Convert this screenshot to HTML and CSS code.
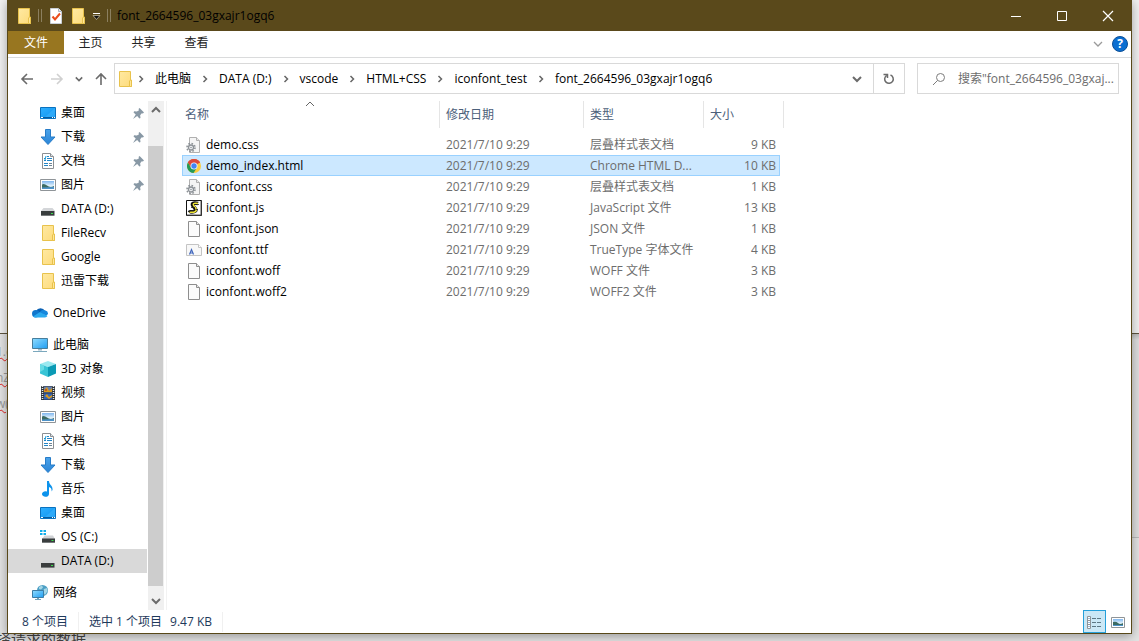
FILE: index.html
```html
<!DOCTYPE html>
<html lang="zh-CN">
<head>
<meta charset="utf-8">
<meta name="viewport" content="width=device-width, initial-scale=1">
<title>font_2664596_03gxajr1ogq6</title>
<link rel="stylesheet" href="styles.css">
</head>
<body>
<svg class="sprite" width="0" height="0" aria-hidden="true">
  <defs>
    <linearGradient id="g-folder" x1="0" y1="0" x2="1" y2="1"><stop offset="0" stop-color="#ffe9a2"/><stop offset="1" stop-color="#fddb7b"/></linearGradient>
    <linearGradient id="g-screen" x1="0" y1="0" x2="1" y2="1"><stop offset="0" stop-color="#2fb0ff"/><stop offset="1" stop-color="#0f93ee"/></linearGradient>
    <linearGradient id="g-pc" x1="0" y1="0" x2="1" y2="1"><stop offset="0" stop-color="#8fdcff"/><stop offset="1" stop-color="#1f9df2"/></linearGradient>
    <linearGradient id="g-arrow" x1="0" y1="0" x2="0" y2="1"><stop offset="0" stop-color="#4aa3ea"/><stop offset="1" stop-color="#2a84d6"/></linearGradient>
    <linearGradient id="g-sky" x1="0" y1="0" x2="0" y2="1"><stop offset="0" stop-color="#7fb6ee"/><stop offset="0.6" stop-color="#e2f2fb"/><stop offset="1" stop-color="#b9d9ea"/></linearGradient>
  </defs>
  <symbol id="folder" viewBox="0 0 16 16">
    <path d="M2.500 .5h11v10.500l1 .5v4h-12z" fill="url(#g-folder)" stroke="#e8c24c"/>
    <path d="M12.500 15.500v-5.500l1-1h1v6.500z" fill="#ffe69a" stroke="#e8c24c"/>
  </symbol>
  <symbol id="check-doc" viewBox="0 0 16 16">
    <path d="M2.500 .5h8l3 3v12h-11z" fill="#fff" stroke="#c9ced6"/>
    <path d="M10.500 .5v3h3" fill="#e6e9ee" stroke="#aab2be"/>
    <path d="M4.500 8.500l2.500 3 5-6" fill="none" stroke="#ea4d1c" stroke-width="2"/>
  </symbol>
  <symbol id="desktop" viewBox="0 0 16 16">
    <path d="M.5 2.500h15v11h-15z" fill="url(#g-screen)" stroke="#0a72bf"/>
    <path d="M4 13L15 3v10z" fill="#48bbff" opacity=".45"/>
    <path d="M1 12h14v1H1z" fill="#075a9c"/><path d="M1 12h2v1H1zM12 12h1v1h-1zM14 12h1v1h-1z" fill="#fff"/>
  </symbol>
  <symbol id="download" viewBox="0 0 16 16"><path d="M5.500 .5h5v7.500h4.500l-7 7.500-7-7.500h4.500z" fill="url(#g-arrow)" stroke="#277cc8"/></symbol>
  <symbol id="document" viewBox="0 0 16 16">
    <path d="M2.500 .5h8l3 3v12h-11z" fill="#fff" stroke="#8b8f93"/><path d="M10.500 .5v3h3" fill="#dfe3e6" stroke="#8b8f93"/>
    <path d="M4 5.500h1.500M7 3.500h2M7 5.500h5M4 7.500h2M7 7.500h5M4 10.500h4M4 12.500h4" stroke="#2586c7"/>
    <path d="M6 3l-1 4" stroke="#16a0dd"/><path d="M9 10h3v1H9zM9 12h3v1H9z" fill="#6e8495"/>
  </symbol>
  <symbol id="picture" viewBox="0 0 16 16">
    <path d="M.5 2.500h15v11h-15z" fill="#fff" stroke="#8f9498"/><path d="M2 4h12v8H2z" fill="url(#g-sky)"/>
    <path d="M2 7.500q2-1.500 5 1t7 .5v3H2z" fill="#3c6b63"/><path d="M2 10.500l12-.5v2H2z" fill="#4d92c8"/>
  </symbol>
  <symbol id="drive" viewBox="0 0 16 16">
    <path d="M3.500 7h9l2.500 3H1z" fill="#d4d6d9"/><path d="M1 10h13.500v4H1z" fill="#393d3e"/>
    <path d="M1 14h13.500v1H1z" fill="#777b7c"/><path d="M11 12h2v1h-2z" fill="#38e04a"/>
  </symbol>
  <symbol id="os-drive" viewBox="0 0 16 16">
    <path d="M0 1h2.500v2H0zM3.500 1H6v2H3.500zM0 4h2.500v2H0zM3.500 4H6v2H3.500z" fill="#12aeea"/>
    <path d="M4.500 6.500h8.500l2 3.500H2z" fill="#d0d2d5"/><path d="M2 9.500h13V14H2z" fill="#393d3e"/>
    <path d="M2 13h13v1H2z" fill="#777b7c"/><path d="M11.500 11h2v1h-2z" fill="#38e04a"/>
  </symbol>
  <symbol id="cloud" viewBox="0 0 16 16">
    <path d="M4 6a5 4.800 0 0 1 9 0l-2 4H4z" fill="#0a61b4"/><circle cx="3.700" cy="8.700" r="3.700" fill="#1076cc"/>
    <path d="M8 7a4 4 0 0 1 5.500-1.500A3.500 3.500 0 0 1 16 9l-2 2z" fill="#1687dc"/>
    <path d="M1 11.500l7-4.500 7.500 4a3 3 0 0 1-2.500 1.500H3.500A3.500 3.500 0 0 1 1 11.500z" fill="#2aa9ee"/>
  </symbol>
  <symbol id="pc" viewBox="0 0 16 16">
    <path d="M.5 1.500h15v10h-15z" fill="url(#g-pc)" stroke="#477e9c"/><path d="M6 12h4v1.500H6z" fill="#9eb9c8"/><path d="M1 14h14v1H1z" fill="#7ba8bd"/>
  </symbol>
  <symbol id="cube" viewBox="0 0 16 16">
    <path d="M0 3l8-3 8 3-8 3z" fill="#9be9f0"/><path d="M0 3l8 3v10l-8-3.500z" fill="#38c4d5"/><path d="M16 3l-8 3v10l8-3.500z" fill="#0a9ab5"/><path d="M0 3l4 1.500v4L0 11z" fill="#68dbe5"/>
  </symbol>
  <symbol id="video" viewBox="0 0 16 16">
    <path d="M1 1h14v14H1z" fill="#31353a"/><path d="M4 1.500h8v6H4z" fill="#6680ae"/><path d="M4 8.500h8v6H4z" fill="#3465b8"/>
    <path d="M2.500 1v14M13.500 1v14" stroke="#e5e7e9" stroke-width="1.500" stroke-dasharray="1 1"/>
    <path d="M4 5l3-3 2 4 3-3v4H4zM5 11l2-2 2 3 3-2v2l-3 2z" fill="#d89a1d"/><circle cx="6" cy="5" r="1" fill="#b84123"/>
  </symbol>
  <symbol id="music" viewBox="0 0 16 16">
    <path d="M7 0h2c0 4 4 4 3.500 9l-1 1.500c.5-3-1-4-2.500-4.500v7A3.500 2.800 0 1 1 7 10.500z" fill="#0d93ec"/>
  </symbol>
  <symbol id="network" viewBox="0 0 16 16">
    <circle cx="10.500" cy="5.500" r="5.500" fill="#4c9fc5"/><path d="M7 2l3-1.500 1 2-2 2-2-.5zM12 4l3-1 .5 3-2.500 4-2-3z" fill="#a5d6e6"/>
    <path d="M.5 5.500h11v7H.5z" fill="url(#g-pc)" stroke="#3b7da6"/><path d="M5 13h2v1h2v1H3v-1h2z" fill="#71a3bc"/>
  </symbol>
  <symbol id="pin" viewBox="0 0 10 10"><path d="M6 0l4 4-1 1-1-.3-1.500 1.800.3 2.500-1 .5-2-2.200L0 10l2.500-4L.5 4 1 3l2.500.2L5.500 2 5 1z" fill="#8898a5"/></symbol>
  <symbol id="file" viewBox="0 0 16 16"><path d="M2.500 .5h8l3 3v12h-11z" fill="#fbfbfb" stroke="#8e8e8e"/><path d="M10.500 .5v3h3" fill="#e9e9e9" stroke="#8e8e8e"/></symbol>
  <symbol id="css-file" viewBox="0 0 16 16">
    <path d="M3.500 .5h7l3 3v12h-10z" fill="#f5f5f5" stroke="#b0b0b0"/><path d="M10.500 .5v3h3" fill="#e9e9e9" stroke="#b0b0b0"/>
    <circle cx="5" cy="10.500" r="4" fill="none" stroke="#8d9297" stroke-width="1.600" stroke-dasharray="1.600 1.540"/>
    <circle cx="5" cy="10.500" r="2.500" fill="#f0f2f4" stroke="#8d9297" stroke-width="1.300"/><circle cx="5" cy="10.500" r=".8" fill="#8d9297"/>
  </symbol>
  <symbol id="chrome" viewBox="0 0 16 16">
    <circle cx="8" cy="8" r="7" fill="#fccc3d"/><path d="M8 8L1.900 4.500A7 7 0 0 1 14.100 4.500z" fill="#de4a3c"/><path d="M8 4.500h6.100A7 7 0 0 0 1.900 4.500L5 9.700z" fill="#de4a3c"/>
    <path d="M1.900 4.500A7 7 0 0 0 7.500 15l3.500-5.300H5z" fill="#259a56"/><circle cx="8" cy="8" r="3.500" fill="#f4f7fb"/><circle cx="8" cy="8" r="2.700" fill="#4285f4"/>
  </symbol>
  <symbol id="js-file" viewBox="0 0 16 16">
    <path d="M.5 .5h15v15H.5z" fill="#fff" stroke="#111"/><path d="M15 1v14H1" fill="none" stroke="#555"/>
    <path d="M12 3.500C7 2 5 4 7.500 6.500s3.500 4 .5 5S4.500 11 3 12.500" fill="none" stroke="#111" stroke-width="3.600"/>
    <path d="M12 3.500C7.500 2.500 6 4 8.500 6.500s2.500 4.500 0 5.500-3.500-.5-5 .5" fill="none" stroke="#f0e534" stroke-width="1.500"/>
    <path d="M8 4.500h5M5 7.500h4M10 9.500h2M4 10.500h4" stroke="#222" stroke-width=".8"/>
  </symbol>
  <symbol id="ttf-file" viewBox="0 0 16 16">
    <path d="M.5 2.500h12l3 3v8H.5z" fill="#f8f8f8" stroke="#c4c4c4"/><path d="M12.500 2.500v3h3" fill="#fff" stroke="#c4c4c4"/>
    <path d="M3.500 12.500l2-5 2 5M4.500 11h2" fill="none" stroke="#4167bd" stroke-width="1.200"/>
  </symbol>
  <symbol id="chev-right" viewBox="0 0 6 8"><path d="M1.500 1l3 3-3 3" fill="none" stroke="currentColor" stroke-width="1.500"/></symbol>
  <symbol id="chev-down" viewBox="0 0 10 10"><path d="M1 3l4 4 4-4" fill="none" stroke="currentColor" stroke-width="2"/></symbol>
  <symbol id="chev-light" viewBox="0 0 10 10"><path d="M1 3l4 4 4-4" fill="none" stroke="currentColor" stroke-width="1.300"/></symbol>
  <symbol id="chev-thin" viewBox="0 0 10 10"><path d="M1 7l4-4 4 4" fill="none" stroke="currentColor"/></symbol>
  <symbol id="arrow-left" viewBox="0 0 14 14"><path d="M13 7H2M7 2L2 7l5 5" fill="none" stroke="currentColor" stroke-width="1.600"/></symbol>
</svg>

<div class="desktop">
  <div class="backdrop" aria-hidden="true">
    <div class="back-window"></div>
    <div class="back-code"><span>1.c</span><span>nZ</span><span>w(</span></div>
    <div class="back-edge"></div>
    <div class="back-page">择请求的数据</div>
  </div>

  <main class="window">
    <header class="titlebar">
      <div class="quick">
        <svg class="icon"><use href="#folder"/></svg>
        <i class="grip"></i>
        <button class="quick-btn" aria-label="属性"><svg class="icon"><use href="#check-doc"/></svg></button>
        <button class="quick-btn" aria-label="新建文件夹"><svg class="icon"><use href="#folder"/></svg></button>
        <button class="quick-btn" aria-label="自定义快速访问工具栏"><svg class="menu-mark" viewBox="0 0 9 8"><path d="M1 1.500h7" stroke="#fff"/><path d="M1 3.500h7L4.500 7.500z" fill="#111" stroke="#cfc7ae" stroke-width=".7"/></svg></button>
        <i class="grip"></i>
      </div>
      <h1 class="title">font_2664596_03gxajr1ogq6</h1>
      <div class="caption">
        <button aria-label="最小化"><svg viewBox="0 0 12 12"><path d="M1 6.500h10" stroke="#fff"/></svg></button>
        <button aria-label="最大化"><svg viewBox="0 0 12 12"><path d="M1.500 1.500h9v9h-9z" fill="none" stroke="#fff"/></svg></button>
        <button aria-label="关闭"><svg viewBox="0 0 12 12"><path d="M1 1l10 10M11 1L1 11" stroke="#fff" stroke-width="1.200"/></svg></button>
      </div>
    </header>

    <div class="ribbon">
      <button class="tab tab-file">文件</button>
      <button class="tab">主页</button>
      <button class="tab">共享</button>
      <button class="tab">查看</button>
      <div class="ribbon-end">
        <button class="plain muted" aria-label="展开功能区"><svg class="chev"><use href="#chev-light"/></svg></button>
        <button class="help" aria-label="帮助">?</button>
      </div>
    </div>

    <div class="navbar">
      <div class="history">
        <button class="plain" aria-label="后退"><svg class="arrow"><use href="#arrow-left"/></svg></button>
        <button class="plain off flip" aria-label="前进"><svg class="arrow"><use href="#arrow-left"/></svg></button>
        <button class="plain recent" aria-label="最近浏览的位置"><svg class="chev-small"><use href="#chev-down"/></svg></button>
        <button class="plain up" aria-label="上移"><svg class="arrow"><use href="#arrow-left"/></svg></button>
      </div>
      <nav class="address" aria-label="地址">
        <svg class="icon"><use href="#folder"/></svg>
        <svg class="sep"><use href="#chev-right"/></svg><a href="#">此电脑</a>
        <svg class="sep"><use href="#chev-right"/></svg><a href="#">DATA (D:)</a>
        <svg class="sep"><use href="#chev-right"/></svg><a href="#">vscode</a>
        <svg class="sep"><use href="#chev-right"/></svg><a href="#">HTML+CSS</a>
        <svg class="sep"><use href="#chev-right"/></svg><a href="#">iconfont_test</a>
        <svg class="sep"><use href="#chev-right"/></svg><a href="#">font_2664596_03gxajr1ogq6</a>
        <button class="plain drop" aria-label="以前的位置"><svg class="chev"><use href="#chev-down"/></svg></button>
        <button class="plain refresh" aria-label="刷新"><svg class="chev" viewBox="0 0 12 12"><path d="M7.500 2A4.300 4.300 0 1 1 3.500 2.500M.5 1.500h4V5" fill="none" stroke="currentColor" stroke-width="1.500"/></svg></button>
      </nav>
      <label class="search">
        <svg class="lens" viewBox="0 0 14 14"><circle cx="8.500" cy="5.500" r="4" fill="none" stroke="#7c7c7c"/><path d="M5.500 8.500L1 13" stroke="#7c7c7c"/></svg>
        <input type="text" aria-label="搜索" placeholder="搜索&quot;font_2664596_03gxaj...">
      </label>
    </div>

    <div class="body">
      <nav class="tree" aria-label="导航窗格">
        <ul>
          <li><a href="#"><svg class="icon"><use href="#desktop"/></svg>桌面<svg class="pin"><use href="#pin"/></svg></a></li>
          <li><a href="#"><svg class="icon"><use href="#download"/></svg>下载<svg class="pin"><use href="#pin"/></svg></a></li>
          <li><a href="#"><svg class="icon"><use href="#document"/></svg>文档<svg class="pin"><use href="#pin"/></svg></a></li>
          <li><a href="#"><svg class="icon"><use href="#picture"/></svg>图片<svg class="pin"><use href="#pin"/></svg></a></li>
          <li><a href="#"><svg class="icon"><use href="#drive"/></svg>DATA (D:)</a></li>
          <li><a href="#"><svg class="icon"><use href="#folder"/></svg>FileRecv</a></li>
          <li><a href="#"><svg class="icon"><use href="#folder"/></svg>Google</a></li>
          <li><a href="#"><svg class="icon"><use href="#folder"/></svg>迅雷下载</a></li>
        </ul>
        <ul>
          <li><a class="root" href="#"><svg class="icon"><use href="#cloud"/></svg>OneDrive</a></li>
        </ul>
        <ul>
          <li><a class="root" href="#"><svg class="icon"><use href="#pc"/></svg>此电脑</a></li>
          <li><a href="#"><svg class="icon"><use href="#cube"/></svg>3D 对象</a></li>
          <li><a href="#"><svg class="icon"><use href="#video"/></svg>视频</a></li>
          <li><a href="#"><svg class="icon"><use href="#picture"/></svg>图片</a></li>
          <li><a href="#"><svg class="icon"><use href="#document"/></svg>文档</a></li>
          <li><a href="#"><svg class="icon"><use href="#download"/></svg>下载</a></li>
          <li><a href="#"><svg class="icon"><use href="#music"/></svg>音乐</a></li>
          <li><a href="#"><svg class="icon"><use href="#desktop"/></svg>桌面</a></li>
          <li><a href="#"><svg class="icon"><use href="#os-drive"/></svg>OS (C:)</a></li>
          <li><a class="current" href="#"><svg class="icon"><use href="#drive"/></svg>DATA (D:)</a></li>
        </ul>
        <ul>
          <li><a class="root" href="#"><svg class="icon"><use href="#network"/></svg>网络</a></li>
        </ul>
      </nav>
      <div class="scrollbar">
        <button class="plain flip-up" aria-label="向上滚动"><svg class="chev"><use href="#chev-down"/></svg></button>
        <div class="track"><div class="thumb"></div></div>
        <button class="plain" aria-label="向下滚动"><svg class="chev"><use href="#chev-down"/></svg></button>
      </div>
      <section class="files">
        <table>
          <colgroup><col class="c-name"><col class="c-date"><col class="c-type"><col class="c-size"><col class="c-end"></colgroup>
          <thead>
            <tr><th>名称<svg class="sort"><use href="#chev-thin"/></svg></th><th>修改日期</th><th>类型</th><th colspan="2">大小</th></tr>
          </thead>
          <tbody>
            <tr><td><span class="name"><svg class="icon"><use href="#css-file"/></svg>demo.css</span></td><td>2021/7/10 9:29</td><td>层叠样式表文档</td><td>9 KB</td></tr>
            <tr class="selected"><td><span class="name"><svg class="icon"><use href="#chrome"/></svg>demo_index.html</span></td><td>2021/7/10 9:29</td><td>Chrome HTML D...</td><td>10 KB</td></tr>
            <tr><td><span class="name"><svg class="icon"><use href="#css-file"/></svg>iconfont.css</span></td><td>2021/7/10 9:29</td><td>层叠样式表文档</td><td>1 KB</td></tr>
            <tr><td><span class="name"><svg class="icon"><use href="#js-file"/></svg>iconfont.js</span></td><td>2021/7/10 9:29</td><td>JavaScript 文件</td><td>13 KB</td></tr>
            <tr><td><span class="name"><svg class="icon"><use href="#file"/></svg>iconfont.json</span></td><td>2021/7/10 9:29</td><td>JSON 文件</td><td>1 KB</td></tr>
            <tr><td><span class="name"><svg class="icon"><use href="#ttf-file"/></svg>iconfont.ttf</span></td><td>2021/7/10 9:29</td><td>TrueType 字体文件</td><td>4 KB</td></tr>
            <tr><td><span class="name"><svg class="icon"><use href="#file"/></svg>iconfont.woff</span></td><td>2021/7/10 9:29</td><td>WOFF 文件</td><td>3 KB</td></tr>
            <tr><td><span class="name"><svg class="icon"><use href="#file"/></svg>iconfont.woff2</span></td><td>2021/7/10 9:29</td><td>WOFF2 文件</td><td>3 KB</td></tr>
          </tbody>
        </table>
      </section>
    </div>

    <footer class="status">
      <span class="count">8 个项目</span>
      <span class="chosen"><span>选中 1 个项目</span><span>9.47 KB</span></span>
      <div class="views">
        <button class="view on" aria-label="详细信息"><svg class="icon" viewBox="0 0 16 16"><path d="M.5 2.500h3v12h-3zM.5 6.500h3M.5 10.500h3" fill="#fff" stroke="#8f9498"/><path d="M2 4v1M2 8v1M2 12v1" stroke="#3478b5"/><path d="M5 4.500h4M10 4.500h4M5 8.500h4M10 8.500h4M5 12.500h4M10 12.500h4" stroke="#5d7885"/></svg></button>
        <button class="view" aria-label="大缩略图"><svg class="icon" viewBox="0 0 16 16"><path d="M1.500 3.500h13v10h-13z" fill="#fff" stroke="#8f9498"/><path d="M3 5h10v7H3z" fill="url(#g-sky)"/><path d="M3 8q3-1 5 1t5 0v3H3z" fill="#3c6b63"/><path d="M3 11h10v1H3z" fill="#4d92c8"/></svg></button>
      </div>
    </footer>
  </main>
</div>
</body>
</html>
```
FILE: styles.css
```css
* { box-sizing: border-box; }

body {
  margin: 0;
  color: #000;
  font: 12px/20px "Open Sans", "Noto Sans CJK SC", sans-serif;
}

button { border: 0; padding: 0; background: none; color: inherit; font: inherit; }
a { color: inherit; text-decoration: none; }
svg { display: block; flex: none; }
ul { margin: 0; padding: 0; list-style: none; }

.sprite { position: absolute; }
.icon { width: 16px; height: 16px; }
.chev { width: 10px; height: 10px; }
.chev-small { width: 8px; height: 8px; }
.plain { display: flex; align-items: center; justify-content: center; color: #6b6b6b; }
.plain.muted { color: #9a9a9a; }
.plain.off { color: #d0d0d0; }

/* Desktop and the windows lying behind */
.desktop {
  position: relative;
  display: flex;
  height: 100vh;
  min-height: 640px;
  padding: 0 7px 7px;
  overflow: hidden;
  background: #e3e3e3;
}
.backdrop { position: absolute; inset: 0; overflow: hidden; }
.back-window {
  position: absolute; inset: 0 0 auto; height: 334px;
  border-bottom: 1px solid #5e5540;
  background: #f1f1f1;
}
.back-code {
  position: absolute; left: -4px; top: 342px;
  display: flex; flex-direction: column; gap: 6px;
  color: #999;
}
.back-code span { height: 20px; text-decoration: underline wavy #e02020 1px; }
.back-edge { position: absolute; right: 0; top: 334px; width: 7px; height: 204px; border-bottom: 1px solid #bbb; background: linear-gradient(#bcbcbc, #dedede 6px); }
.back-page { position: absolute; left: -4px; bottom: -8px; font-size: 15px; color: #444; }

/* Explorer window */
.window {
  position: relative;
  display: flex; flex: 1; flex-direction: column;
  min-width: 0;
  border: 1px solid #584819;
  border-top: 0;
  background: #fff;
  box-shadow: 0 2px 10px rgba(0, 0, 0, .35);
}

.titlebar { display: flex; align-items: center; height: 31px; background: #5a491b; }
.quick { display: flex; align-items: center; gap: 6px; padding-left: 8px; }
.quick-btn { display: flex; }
.grip { width: 4px; height: 13px; border: 1px solid #8b7f5f; border-width: 0 1px; }
.menu-mark { width: 9px; height: 8px; }
.title { margin: 0 0 0 6px; flex: 1; font-size: 12px; font-weight: 400; }
.caption { display: flex; align-self: stretch; }
.caption button { display: flex; align-items: center; justify-content: center; width: 46px; }
.caption svg { width: 12px; height: 12px; }

.ribbon { display: flex; height: 27px; border-bottom: 1px solid #dadbdc; color: #222; }
.tab { width: 53px; height: 24px; }
.tab-file { width: 56px; height: 23px; background: #987620; color: #fff; }
.ribbon-end { display: flex; align-items: center; gap: 9px; margin-left: auto; padding-right: 3px; }
.help {
  width: 16px; height: 16px;
  border: 1px solid #0b4f97; border-radius: 50%;
  background: #0a6ed1; color: #fff;
  font-weight: 700; line-height: 14px;
}

.navbar { display: flex; align-items: center; gap: 12px; padding: 5px 12px 6px 12px; }
.history { display: flex; align-items: center; gap: 16px; margin-right: -12px; }
.arrow { width: 14px; height: 14px; }
.flip svg { transform: scaleX(-1); }
.flip-up svg { transform: scaleY(-1); }
.up svg { transform: rotate(90deg); }
.recent { margin: 0 -5px; }
.up { margin-right: 6px; }
.address {
  display: flex; flex: 1; align-items: center; gap: 11px;
  min-width: 0; height: 31px;
  padding-left: 2px;
  border: 1px solid #d9d9d9;
  white-space: nowrap;
}
.address .icon { margin-right: -6px; }
.sep { width: 6px; height: 8px; color: #666; }
.drop { margin-left: auto; }
.refresh { align-self: stretch; width: 31px; border-left: 1px solid #d9d9d9; }
.refresh .chev { width: 12px; height: 12px; }
.search {
  display: flex; align-items: center; gap: 12px;
  width: 202px; height: 31px;
  padding-left: 14px;
  border: 1px solid #d9d9d9;
}
.lens { width: 14px; height: 14px; }
.search input { flex: 1; min-width: 0; border: 0; padding: 0; outline: 0; background: none; font: inherit; }
.search input::placeholder { color: #6d6d6d; opacity: 1; }

/* Navigation pane and file list */
.body { display: flex; flex: 1; min-height: 0; padding-top: 1px; }
.tree { display: flex; flex-direction: column; gap: 8px; width: 140px; overflow: hidden; }
.tree a { display: flex; align-items: center; gap: 5px; height: 24px; margin-right: 1px; padding: 0 3px 0 32px; }
.tree .root { padding-left: 24px; }
.tree .current { background: #d9d9d9; }
.pin { width: 11px; height: 11px; margin-left: auto; }
.scrollbar { display: flex; flex-direction: column; width: 16px; background: #f0f0f0; }
.scrollbar .plain { height: 18px; }
.track { flex: 1; padding: 27px 1px 6px 0; }
.thumb { height: 100%; background: #cdcdcd; }
.files { flex: 1; min-width: 0; margin-left: 2px; padding-left: 15px; border-left: 1px solid #f2f2f2; }

table { width: 602px; table-layout: fixed; border-collapse: separate; border-spacing: 0; }
.c-name { width: 258px; }
.c-date { width: 144px; }
.c-type { width: 120px; }
.c-size { width: 76px; }
.c-end { width: 4px; }
th { position: relative; height: 27px; padding: 0 6px; border-right: 1px solid #e5e5e5; color: #4c607a; font-weight: 400; text-align: left; }
th:first-child { padding-left: 3px; }
.sort { position: absolute; top: -2px; left: calc(50% - 6px); width: 10px; height: 10px; color: #666; }
thead::after { content: ""; display: block; height: 6px; }
td { height: 21px; padding: 0 6px; border: solid transparent; border-width: 1px 0; color: #6d6d6d; line-height: 19px; white-space: nowrap; }
td:first-child { padding-left: 3px; border-left-width: 1px; color: #000; }
td:nth-child(4) { padding-right: 3px; border-right-width: 1px; text-align: right; }
.selected td { border-color: #99d1ff; background: #cce8ff; }
.name { display: flex; align-items: center; gap: 4px; }

.status { display: flex; align-items: center; height: 23px; color: #1e395b; }
.count { padding: 0 10px 0 14px; border-right: 1px solid #f0f0f0; }
.chosen { display: flex; gap: 8px; padding: 0 10px; border-right: 1px solid #f0f0f0; }
.views { display: flex; align-self: stretch; margin-left: auto; padding-right: 2px; }
.view { display: flex; align-items: center; justify-content: center; width: 23px; border: 1px solid transparent; }
.view.on { border-color: #26a0da; background: #cbe8f6; }
```
